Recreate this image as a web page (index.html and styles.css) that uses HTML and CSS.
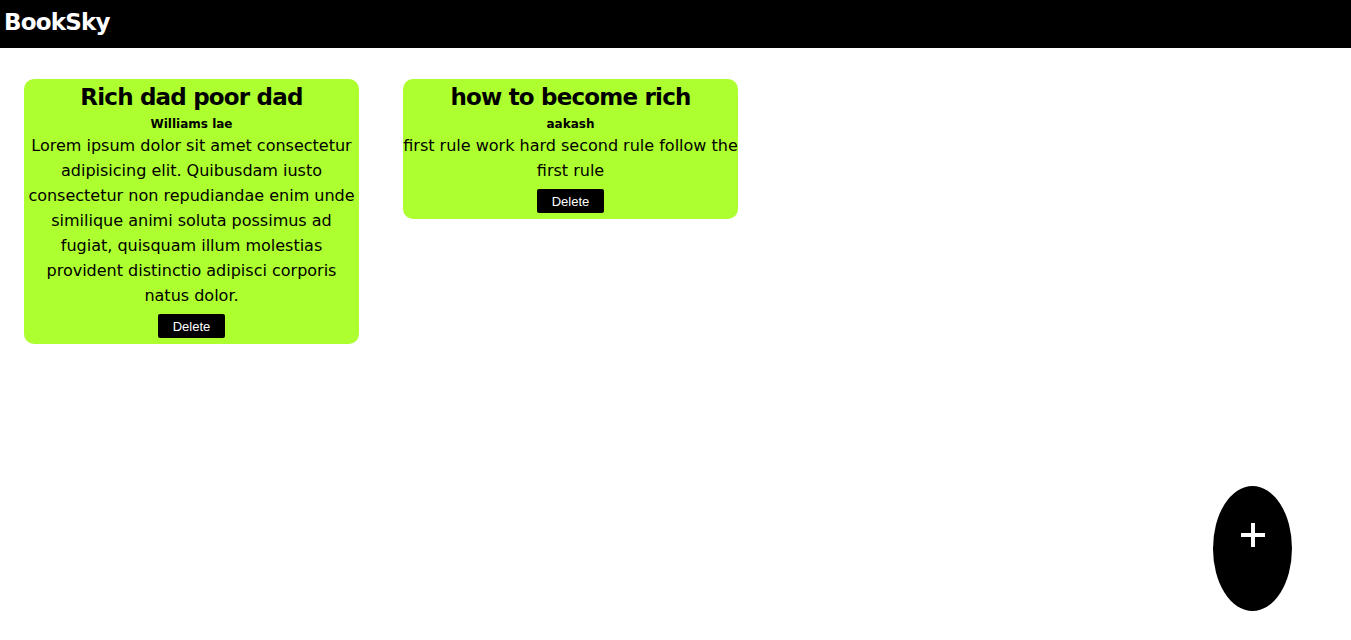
FILE: index.html
```html
<!DOCTYPE html>
<html lang="en">
<head>
<meta charset="utf-8">
<title>BookSky</title>
<link rel="stylesheet" href="styles.css">
</head>
<body>
<nav class="navbar"><span class="brand">BookSky</span></nav>
<main class="book-list">
  <article class="card">
    <h2 class="title">Rich dad poor dad</h2>
    <h4 class="author">Williams lae</h4>
    <p class="desc">Lorem ipsum dolor sit amet consectetur adipisicing elit. Quibusdam iusto consectetur non repudiandae enim unde similique animi soluta possimus ad fugiat, quisquam illum molestias provident distinctio adipisci corporis natus dolor.</p>
    <button class="delete">Delete</button>
  </article>
  <article class="card">
    <h2 class="title">how to become rich</h2>
    <h4 class="author">aakash</h4>
    <p class="desc">first rule work hard second rule follow the first rule</p>
    <button class="delete">Delete</button>
  </article>
</main>
<button class="fab" aria-label="Add book">
  <svg class="fab-icon" width="26" height="26" viewBox="0 0 26 26"><path d="M13 1v24M1 13h24" stroke="#fff" stroke-width="4" fill="none"/></svg>
</button>
</body>
</html>
```
FILE: styles.css
```css
* { box-sizing: border-box; }
body {
  margin: 0;
  font-family: "DejaVu Sans", "Noto Sans", sans-serif;
  background: #fff;
  color: #000;
}
.navbar {
  background: #000;
  height: 48px;
  display: flex;
  align-items: center;
  padding: 0 4px;
}
.brand {
  color: #fff;
  font-weight: 700;
  font-size: 23px;
  letter-spacing: -0.8px;
  margin-top: -4px;
}
.book-list {
  display: flex;
  align-items: flex-start;
  gap: 44px;
  padding: 31px 24px;
}
.card {
  width: 335px;
  background: #adff2f;
  border-radius: 10px;
  text-align: center;
  display: flex;
  flex-direction: column;
  align-items: center;
  padding-bottom: 6px;
}
.title {
  margin: 0;
  font-size: 23px;
  line-height: 36px;
  font-weight: 700;
  letter-spacing: -0.8px;
}
.author {
  margin: 0;
  font-size: 12px;
  line-height: 18px;
  font-weight: 700;
}
.desc {
  margin: 0 0 6px;
  font-size: 16px;
  line-height: 25px;
  letter-spacing: 0;
}
.delete {
  background: #000;
  color: #fff;
  border: none;
  border-radius: 2px;
  font-family: "Liberation Sans", Arial, sans-serif;
  font-size: 13px;
  height: 24px;
  width: 67px;
  padding: 0;
}
.fab {
  position: fixed;
  right: 59px;
  bottom: 29px;
  width: 79px;
  height: 125px;
  border-radius: 50%;
  background: #000;
  border: none;
  display: flex;
  align-items: center;
  justify-content: center;
  padding: 0;
}
.fab-icon {
  margin-bottom: 28px;
}
```
